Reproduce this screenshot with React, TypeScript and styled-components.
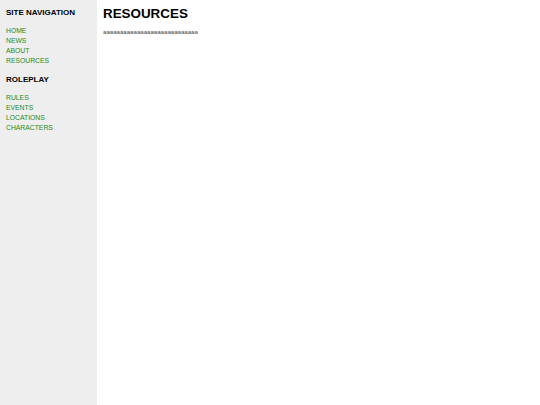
import React from 'react'
import styled, { createGlobalStyle } from 'styled-components'

const GlobalStyle = createGlobalStyle`
  html, body, #root {
    height: 100%;
  }
  body {
    margin: 0;
    background: #fff;
    font-family: "Liberation Sans", Arial, sans-serif;
  }
`

const Page = styled.div`
  display: flex;
  height: 100%;
`

const Sidebar = styled.nav`
  width: 91px;
  flex-shrink: 0;
  background: #eeeeee;
  padding: 7px 0 0 6px;
`

const NavHeading = styled.h2`
  margin: 0;
  font-size: 8px;
  line-height: 11px;
  font-weight: bold;
  color: #000;
`

const NavList = styled.ul`
  list-style: none;
  margin: 8px 0 8px;
  padding: 0;
`

const NavLink = styled.a`
  display: block;
  font-size: 6.8px;
  line-height: 10px;
  color: #228b22;
  text-decoration: none;
`

const Main = styled.main`
  flex: 1;
  padding: 5px 0 0 6px;
`

const Title = styled.h1`
  margin: 0;
  font-size: 13.4px;
  line-height: 18px;
  font-weight: bold;
  color: #000;
`

const Body = styled.p`
  margin: 5px 0 0;
  font-size: 6.1px;
  line-height: 8px;
  color: #444;
`

const sections = [
  { title: 'SITE NAVIGATION', links: ['HOME', 'NEWS', 'ABOUT', 'RESOURCES'] },
  { title: 'ROLEPLAY', links: ['RULES', 'EVENTS', 'LOCATIONS', 'CHARACTERS'] },
]

export default function App() {
  return (
    <>
      <GlobalStyle />
      <Page>
        <Sidebar>
          {sections.map(s => (
            <div key={s.title}>
              <NavHeading>{s.title}</NavHeading>
              <NavList>
                {s.links.map(l => (
                  <li key={l}>
                    <NavLink href="#">{l}</NavLink>
                  </li>
                ))}
              </NavList>
            </div>
          ))}
        </Sidebar>
        <Main>
          <Title>RESOURCES</Title>
          <Body>{'a'.repeat(28)}</Body>
        </Main>
      </Page>
    </>
  )
}
